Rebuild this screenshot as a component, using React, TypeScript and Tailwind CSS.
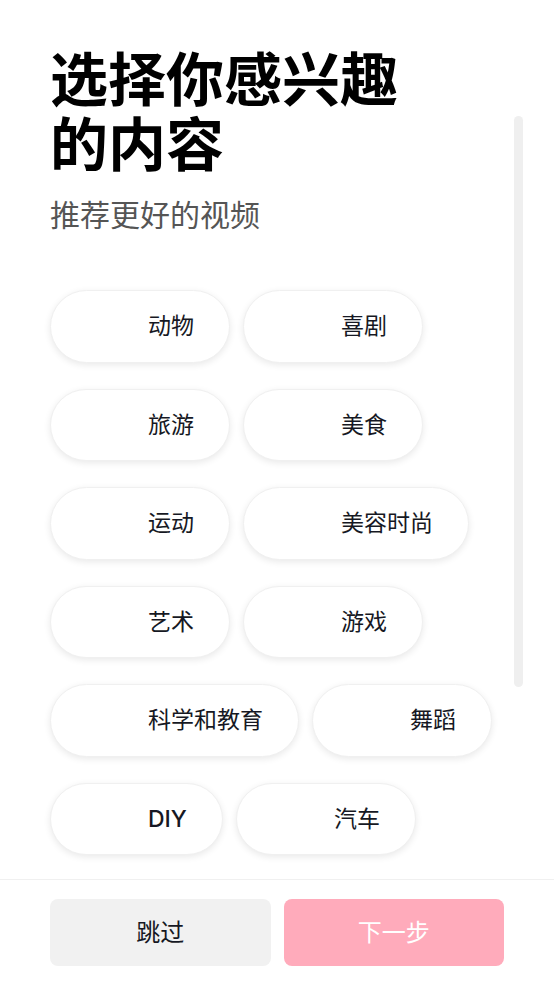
import React, { useState } from 'react';

const topics = ['动物', '喜剧', '旅游', '美食', '运动', '美容时尚', '艺术', '游戏', '科学和教育', '舞蹈', 'DIY', '汽车'];

const font = { fontFamily: '"Inter", "Noto Sans CJK SC", sans-serif' };

export default function App() {
  const [picked, setPicked] = useState<string[]>([]);

  const toggle = (t: string) => {
    setPicked(prev => (prev.includes(t) ? prev.filter(p => p !== t) : [...prev, t]));
  };

  return (
    <div style={font} className="h-[985px] w-full flex flex-col bg-white text-[#161823]">
      <div className="relative flex-1 overflow-hidden px-[50px] pt-[48px]">
        <h1 className="max-w-[380px] text-[58px] leading-[65px] font-semibold text-black">选择你感兴趣的内容</h1>
        <p className="mt-[17px] text-[30px] leading-[40px] text-[#555]">推荐更好的视频</p>

        <div className="mt-[55px] flex flex-wrap gap-x-[13px] gap-y-[26px]">
          {topics.map(t => (
            <button
              key={t}
              onClick={() => toggle(t)}
              className={`h-[72.5px] rounded-full pl-[97px] pr-[35px] text-[23px] leading-[30px] bg-white border shadow-[0_2px_7px_rgba(0,0,0,0.09)] ${
                /^[A-Z]+$/.test(t) ? 'font-medium' : 'font-normal'
              } ${picked.includes(t) ? 'border-[#fe2c55]' : 'border-[#f0f0f0]'}`}
            >
              {t}
            </button>
          ))}
        </div>

        <div className="absolute right-[31px] top-[116px] w-[9px] h-[571px] rounded-full bg-[#efefef]" />
      </div>

      <div className="border-t border-[#f0f0f0] px-[50px] py-[19px] flex gap-[13px]">
        <button className="flex-1 h-[67px] rounded-lg bg-[#f1f1f1] text-[24px] text-[#161823]">跳过</button>
        <button
          disabled={picked.length === 0}
          className={`flex-1 h-[67px] rounded-lg text-[24px] text-white ${picked.length ? 'bg-[#fe2c55]' : 'bg-[#ffabbb]'}`}
        >
          下一步
        </button>
      </div>
    </div>
  );
}
